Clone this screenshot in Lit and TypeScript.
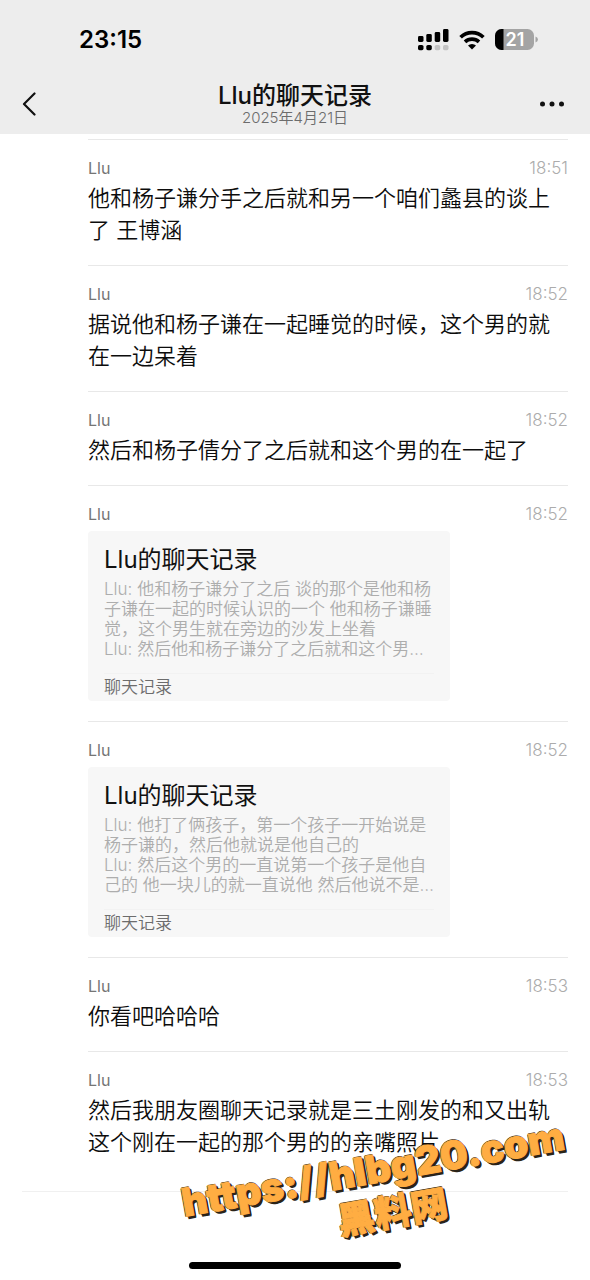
import { LitElement, html, css } from "lit";
import { customElement, property } from "lit/decorators.js";

interface Entry {
  time: string;
  text?: string;
  record?: string;
}

const SENDER = "Llu";
const TITLE = "Llu的聊天记录";

const ENTRIES: Entry[] = [
  { time: "18:51", text: "他和杨子谦分手之后就和另一个咱们蠡县的谈上了 王博涵" },
  { time: "18:52", text: "据说他和杨子谦在一起睡觉的时候，这个男的就在一边呆着" },
  { time: "18:52", text: "然后和杨子倩分了之后就和这个男的在一起了" },
  {
    time: "18:52",
    record:
      "Llu: 他和杨子谦分了之后 谈的那个是他和杨子谦在一起的时候认识的一个 他和杨子谦睡觉，这个男生就在旁边的沙发上坐着\nLlu: 然后他和杨子谦分了之后就和这个男…",
  },
  {
    time: "18:52",
    record:
      "Llu: 他打了俩孩子，第一个孩子一开始说是杨子谦的，然后他就说是他自己的\nLlu: 然后这个男的一直说第一个孩子是他自己的 他一块儿的就一直说他 然后他说不是…",
  },
  { time: "18:53", text: "你看吧哈哈哈" },
  { time: "18:53", text: "然后我朋友圈聊天记录就是三土刚发的和又出轨这个刚在一起的那个男的的亲嘴照片" },
];

@customElement("status-bar")
class StatusBar extends LitElement {
  static styles = css`
    :host {
      display: flex;
      justify-content: space-between;
      align-items: center;
      height: 80px;
      padding: 0 51px 0 79px;
    }
    .clock {
      font-size: 24px;
      line-height: 28px;
      font-weight: 600;
      color: #000;
    }
    .icons {
      display: flex;
      align-items: center;
      gap: 10px;
    }
    svg {
      display: block;
    }
    .level {
      font-size: 18px;
      font-weight: 600;
      fill: #fff;
    }
  `;
  render() {
    return html`
      <time class="clock">23:15</time>
      <div class="icons">
        <svg width="31" height="22" viewBox="0 0 31 22" role="img" aria-label="信号">
          <rect x="0" y="7" width="5.500" height="6" rx="1.400" />
          <rect x="8.300" y="5" width="5.500" height="8" rx="1.400" />
          <rect x="16.700" y="3" width="5.500" height="10" rx="1.400" />
          <rect x="25" y="0" width="5.500" height="13" rx="1.400" />
          <rect x="0" y="16" width="5.500" height="5.200" rx="1.600" />
          <rect x="8.300" y="16" width="5.500" height="5.200" rx="1.600" />
          <rect x="16.700" y="16" width="5.500" height="5.200" rx="1.600" fill="#c3c3c3" />
          <rect x="25" y="16" width="5.500" height="5.200" rx="1.600" fill="#c3c3c3" />
        </svg>
        <svg width="26" height="20" viewBox="0 0 26 20" role="img" aria-label="无线网络">
          <path d="M1.600 7.300 A16.200 16.200 0 0 1 24.400 7.300" fill="none" stroke="#000" stroke-width="3.700" />
          <path d="M6 11.900 A10.200 10.200 0 0 1 20 11.900" fill="none" stroke="#000" stroke-width="3.600" />
          <path d="M13 19.500 L9 15.500 A5.800 5.800 0 0 1 17 15.500 Z" />
        </svg>
        <svg width="44" height="22" viewBox="0 0 44 22" role="img" aria-label="电量 21%">
          <rect x="0" y="0" width="39" height="21" rx="6.500" fill="#a4a4a4" />
          <path d="M8.500 0 H6.500 A6.500 6.500 0 0 0 0 6.500 V14.500 A6.500 6.500 0 0 0 6.500 21 H8.500 Z" />
          <path d="M40.500 7.500 Q43 8.300 43 10.500 Q43 12.700 40.500 13.500 Z" fill="#a4a4a4" />
          <text class="level" x="20" y="17" text-anchor="middle">21</text>
        </svg>
      </div>
    `;
  }
}

@customElement("record-entry")
class RecordEntry extends LitElement {
  @property({ attribute: false }) entry!: Entry;
  static styles = css`
    :host {
      display: block;
      border-top: 1px solid #e8e8e8;
      padding: 17px 0 19px;
    }
    .meta {
      display: flex;
      justify-content: space-between;
      font-size: 16px;
      line-height: 22px;
      margin-bottom: 3px;
    }
    .name {
      color: #757575;
    }
    .time {
      font-size: 17px;
      font-weight: 350;
      color: #acacac;
    }
    .text {
      margin: 0;
      font-size: 22px;
      line-height: 32px;
      font-weight: 350;
      color: #0c0c0c;
    }
    .card {
      box-sizing: border-box;
      max-width: 362px;
      margin: 6px 0 1px;
      padding: 13px 12px 0 16px;
      border-radius: 4px;
      background: #f7f7f7;
    }
    .title {
      margin: 0 0 3px;
      font-size: 24px;
      line-height: 32px;
      font-weight: 400;
      color: #111;
    }
    .body {
      margin: 0 0 14px;
      font-size: 17px;
      line-height: 20px;
      font-weight: 350;
      color: #adadad;
      white-space: pre-line;
    }
    .foot {
      margin-right: 4px;
      border-top: 1px solid #f2f2f2;
      font-size: 17px;
      line-height: 27px;
      font-weight: 350;
      color: #6c6c6c;
    }
  `;
  render() {
    const e = this.entry;
    return html`
      <div class="meta"><span class="name">${SENDER}</span><time class="time">${e.time}</time></div>
      ${e.record
        ? html`<article class="card">
            <h2 class="title">${TITLE}</h2>
            <p class="body">${e.record}</p>
            <div class="foot">聊天记录</div>
          </article>`
        : html`<p class="text">${e.text}</p>`}
    `;
  }
}

@customElement("app-root")
class AppRoot extends LitElement {
  static styles = css`
    :host {
      position: relative;
      display: flex;
      flex-direction: column;
      min-height: 100vh;
      overflow: hidden;
      background: #fff;
      font-family: Inter, "Noto Sans CJK SC", sans-serif;
      color: #111;
    }
    .header {
      padding-bottom: 6px;
      background: #ededed;
    }
    .nav {
      display: grid;
      grid-template-columns: 64px 1fr 64px;
      align-items: center;
      height: 48px;
    }
    .heading {
      display: flex;
      flex-direction: column;
      align-items: center;
    }
    .title {
      margin: 0;
      font-size: 24px;
      line-height: 28px;
      font-weight: 500;
    }
    .date {
      font-size: 15px;
      line-height: 16px;
      font-weight: 350;
      color: #6c6c6c;
    }
    .icon {
      display: flex;
      align-items: center;
      height: 48px;
      padding: 0 22px;
      border: 0;
      background: none;
      color: #111;
    }
    .more {
      justify-content: flex-end;
      padding: 0 25px 0 0;
    }
    .list {
      padding: 5px 22px 14px 88px;
    }
    .end {
      align-self: stretch;
      margin: 0 22px;
      border: 0;
      border-top: 1px solid #f0f0f0;
    }
    .home {
      width: 36%;
      height: 7px;
      margin: auto auto 11px;
      border-radius: 4px;
      background: #000;
    }
    .mark {
      position: absolute;
      right: 19px;
      bottom: 42px;
      display: flex;
      flex-direction: column;
      align-items: center;
      transform: rotate(-10deg);
      font-weight: 900;
      color: #ffad42;
      white-space: nowrap;
      text-shadow: -1px 0 0 #2b2418, 0 -1px 0 #2b2418, 1px 1px 0 #2b2418, 2px 2px 0 #2b2418, 2px 3px 0 #2b2418;
      -webkit-text-stroke: 1px #ffad42;
      pointer-events: none;
    }
    .url {
      font-size: 39px;
      line-height: 46px;
    }
    .site {
      padding-left: 24px;
      font-size: 37px;
      line-height: 46px;
    }
  `;
  render() {
    return html`
      <header class="header">
        <status-bar></status-bar>
        <nav class="nav">
          <button class="icon" aria-label="返回">
            <svg width="14" height="24" viewBox="0 0 14 24">
              <path d="M12.500 1.500 L2 12 L12.500 22.500" fill="none" stroke="currentColor" stroke-width="2.200" stroke-linecap="round" stroke-linejoin="round" />
            </svg>
          </button>
          <div class="heading">
            <h1 class="title">${TITLE}</h1>
            <time class="date">2025年4月21日</time>
          </div>
          <button class="icon more" aria-label="更多">
            <svg width="26" height="6" viewBox="0 0 26 6" fill="currentColor">
              <circle cx="3.500" cy="3" r="2.500" />
              <circle cx="13" cy="3" r="2.500" />
              <circle cx="22.500" cy="3" r="2.500" />
            </svg>
          </button>
        </nav>
      </header>
      <main class="list">${ENTRIES.map((e) => html`<record-entry .entry=${e}></record-entry>`)}</main>
      <hr class="end" />
      <div class="home"></div>
      <div class="mark">
        <span class="url">https://hlbg20.com</span>
        <span class="site">黑料网</span>
      </div>
    `;
  }
}
